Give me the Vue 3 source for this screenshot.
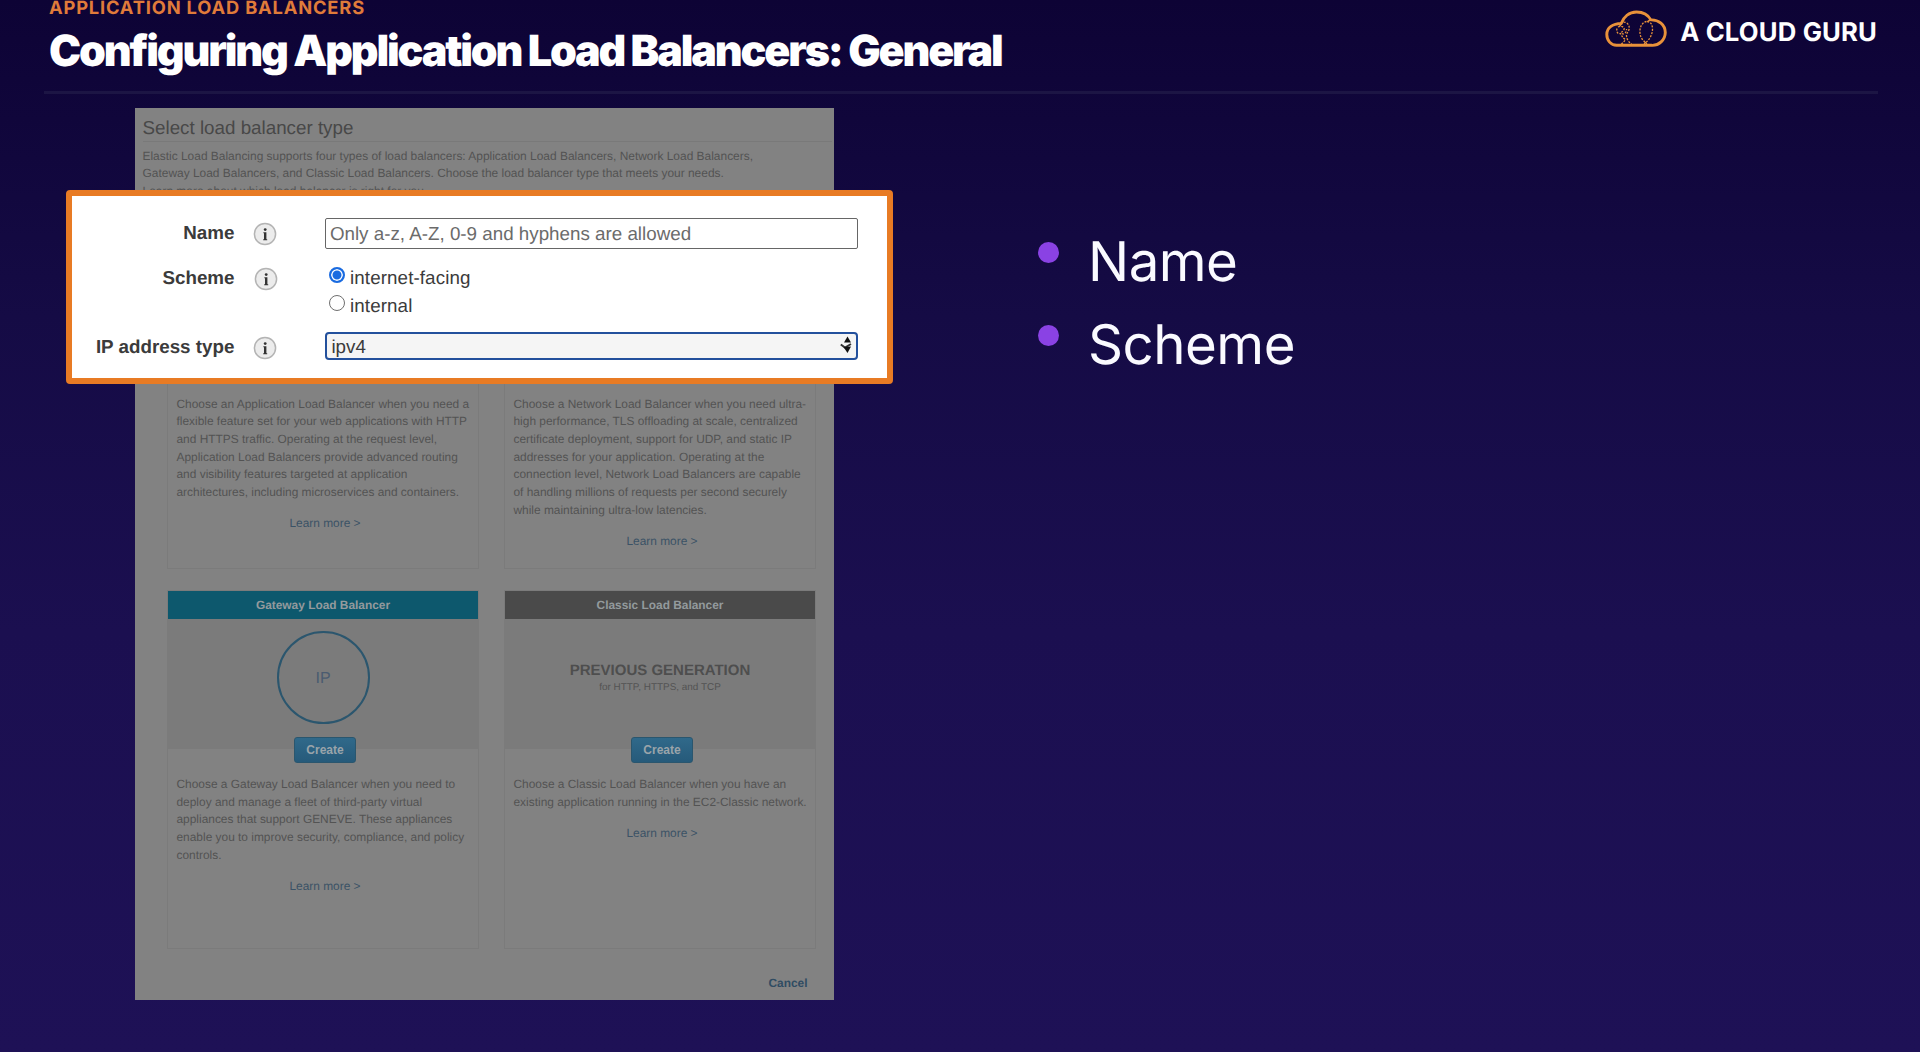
<script setup>
const topCards = [
  {
    lines: [
      'Choose an Application Load Balancer when you need a',
      'flexible feature set for your web applications with HTTP',
      'and HTTPS traffic. Operating at the request level,',
      'Application Load Balancers provide advanced routing',
      'and visibility features targeted at application',
      'architectures, including microservices and containers.',
    ],
  },
  {
    lines: [
      'Choose a Network Load Balancer when you need ultra-',
      'high performance, TLS offloading at scale, centralized',
      'certificate deployment, support for UDP, and static IP',
      'addresses for your application. Operating at the',
      'connection level, Network Load Balancers are capable',
      'of handling millions of requests per second securely',
      'while maintaining ultra-low latencies.',
    ],
  },
]
const bottomCards = [
  {
    title: 'Gateway Load Balancer',
    kind: 'gateway',
    lines: [
      'Choose a Gateway Load Balancer when you need to',
      'deploy and manage a fleet of third-party virtual',
      'appliances that support GENEVE. These appliances',
      'enable you to improve security, compliance, and policy',
      'controls.',
    ],
  },
  {
    title: 'Classic Load Balancer',
    kind: 'classic',
    lines: [
      'Choose a Classic Load Balancer when you have an',
      'existing application running in the EC2-Classic network.',
    ],
  },
]
const bullets = ['Name', 'Scheme']
</script>

<template>
  <div class="slide">
    <header class="head">
      <div class="titles">
        <div class="eyebrow">APPLICATION LOAD BALANCERS</div>
        <h1 class="title">Configuring Application Load Balancers: General</h1>
      </div>
      <div class="brand">
        <svg class="cloud" width="64" height="40" viewBox="0 0 64 40" fill="none" stroke="#e8913a">
          <path d="M12.5 36.3H47.5A13 13 0 0 0 61.3 23.500C61.300 15.500 54.500 10.600 46.800 10.900C44 5.500 38.500 3 32.500 3C25 3 19.500 8 17.200 14.500C9 14.800 2.800 18.500 2.800 25.500C2.800 31.500 7 36.300 12.500 36.300Z" stroke-width="2.900" stroke-linejoin="round" />
          <path d="M46.800 10.900C45.300 11.200 44.300 11.800 43.300 12.800M17.200 14.500C16.500 15.500 16 16.300 15.800 17.500" stroke-width="1.500" />
          <g stroke-width="1.300" stroke-dasharray="2 1.300">
            <path d="M42.500 12.500C37.500 13.500 35.500 19 36 24C36.500 29 39 31.500 41.500 33.500C45 31.500 48.500 26 48.500 20C48.500 15.500 46.500 12.500 42.500 12.500Z" />
            <path d="M41.500 33.500L39 36M41.500 33.500L44 36" />
            <path d="M16.500 14C21 11 26.500 15.500 25 20.500C24.500 22.500 23 23.500 22.500 26C22.300 30 25 33.500 27.500 35" />
            <path d="M13 19.500C12 23 14 25.500 16.500 24.500C18 27 18.500 29 21.500 30.500C20 33 18 34 17 36" />
            <path d="M14 18C17 16.500 21 18 20 20.500S16 23 18 24.500S23 23 22.500 20" />
          </g>
        </svg>
        <span class="brand-name">A CLOUD GURU</span>
      </div>
    </header>
    <div class="rule"></div>

    <main class="content">
      <section class="panel">
        <h2 class="panel-title">Select load balancer type</h2>
        <div class="intro">
          <div>Elastic Load Balancing supports four types of load balancers: Application Load Balancers, Network Load Balancers,</div>
          <div>Gateway Load Balancers, and Classic Load Balancers. Choose the load balancer type that meets your needs.</div>
          <div>Learn more about which load balancer is right for you</div>
        </div>
        <div class="grid">
          <article v-for="(c, i) in topCards" :key="i" class="card top">
            <div class="copy">
              <div v-for="l in c.lines" :key="l">{{ l }}</div>
            </div>
            <div class="more">Learn more &gt;</div>
          </article>
        </div>
        <div class="grid second">
          <article v-for="c in bottomCards" :key="c.title" class="card bottom">
            <div class="card-head" :class="c.kind">{{ c.title }}</div>
            <div class="hero">
              <div v-if="c.kind === 'gateway'" class="ring">IP</div>
              <template v-else>
                <div class="prev">PREVIOUS GENERATION</div>
                <div class="protocols">for HTTP, HTTPS, and TCP</div>
              </template>
              <button class="create">Create</button>
            </div>
            <div class="copy">
              <div v-for="l in c.lines" :key="l">{{ l }}</div>
            </div>
            <div class="more">Learn more &gt;</div>
          </article>
        </div>
        <div class="cancel">Cancel</div>
      </section>

      <ul class="bullets">
        <li v-for="b in bullets" :key="b"><i class="dot"></i><span>{{ b }}</span></li>
      </ul>
    </main>

    <form class="callout">
      <div v-for="f in ['Name', 'Scheme', 'IP address type']" :key="f" class="field" :class="'f-' + f.slice(0, 2).toLowerCase()">
        <label class="label">{{ f }}</label>
        <svg class="info" width="24" height="24" viewBox="0 0 24 24">
          <circle cx="12" cy="12" r="10.600" fill="#ececec" stroke="#b4b4b4" stroke-width="1.500" />
          <circle cx="12.200" cy="7.600" r="1.400" fill="#333" />
          <path d="M10.400 10.200H13.400V17.200H14.200V18.200H10.200V17.200H11V11.200H10.400Z" fill="#333" />
        </svg>
        <div v-if="f === 'Name'" class="input">Only a-z, A-Z, 0-9 and hyphens are allowed</div>
        <div v-else-if="f === 'Scheme'" class="radios">
          <div class="radio"><i class="knob on"></i><span>internet-facing</span></div>
          <div class="radio"><i class="knob"></i><span>internal</span></div>
        </div>
        <div v-else class="select">
          <span>ipv4</span>
          <svg width="12" height="18" viewBox="0 0 12 18">
            <path d="M7.500 0.500L11 6.500H4Z" fill="#111" />
            <path d="M0.800 8.500L5 11.500L11 8" fill="none" stroke="#333" stroke-width="2" />
            <path d="M3.500 11L11 10.500L7.500 17Z" fill="#111" />
          </svg>
        </div>
      </div>
    </form>
  </div>
</template>

<style>
body {
  margin: 0;
  overflow: hidden;
}
</style>

<style scoped>
.slide {
  position: relative;
  box-sizing: border-box;
  width: 1920px;
  height: 1052px;
  overflow: hidden;
  background: linear-gradient(180deg, #0d0335 0%, #150b45 30%, #1b0f50 60%, #1e1156 100%);
  font-family: "Liberation Sans", Arial, sans-serif;
  text-rendering: geometricPrecision;
}
.head {
  display: flex;
  justify-content: space-between;
  height: 91px;
  padding: 0 43px 0 49px;
}
.eyebrow {
  height: 18px;
  font: 700 18.3px/16px Inter, sans-serif;
  letter-spacing: 0.84px;
  color: #e07b3a;
  white-space: nowrap;
}
.title {
  margin: 7px 0 0;
  font: 900 43px/52px Inter, sans-serif;
  letter-spacing: -2.15px;
  color: #fff;
  white-space: nowrap;
}
.brand {
  display: flex;
  align-items: flex-start;
}
.cloud {
  margin: 9px 12px 0 0;
}
.brand-name {
  margin-top: 17px;
  font: 700 25.7px/32px Inter, sans-serif;
  letter-spacing: 0.15px;
  color: #fff;
  white-space: nowrap;
}
.rule {
  height: 3px;
  margin: 0 42px 0 44px;
  background: #1c1544;
}
.content {
  display: flex;
  padding: 14px 0 0 135px;
}
.panel {
  display: flex;
  flex-direction: column;
  box-sizing: border-box;
  width: 699px;
  height: 892px;
  background: #828282;
  color: #535353;
  font-size: 11.9px;
  line-height: 17.67px;
  white-space: nowrap;
}
.panel-title {
  height: 33px;
  margin: 0 2px 0 7.5px;
  border-bottom: 1px solid #797979;
  font-size: 18.8px;
  font-weight: 400;
  line-height: 39px;
  color: #484848;
}
.intro {
  height: 53px;
  box-sizing: border-box;
  flex: none;
  padding: 5.5px 0 0 7.5px;
  margin-bottom: 6px;
  overflow: hidden;
  font-size: 11.95px;
}
.grid {
  display: flex;
  gap: 25px;
  margin-left: 32px;
}
.card {
  display: flex;
  flex-direction: column;
  box-sizing: border-box;
  width: 312px;
  border: 1px solid #7b7b7b;
}
.top {
  height: 368px;
  padding-top: 193.5px;
}
.second {
  margin-top: 21px;
}
.bottom {
  height: 359px;
}
.copy {
  padding-left: 8.5px;
  font-size: 11.91px;
}
.more {
  margin-top: 13.5px;
  padding-left: 4px;
  text-align: center;
  color: #3b5266;
}
.card-head {
  height: 28px;
  text-align: center;
  font-weight: 700;
  line-height: 28px;
  color: #939a9d;
}
.gateway {
  background: #0d586d;
}
.classic {
  background: #4a4a4a;
}
.hero {
  position: relative;
  display: flex;
  flex-direction: column;
  align-items: center;
  height: 130px;
  margin-bottom: 27px;
  background: #7b7b7b;
}
.ring {
  box-sizing: border-box;
  width: 93px;
  height: 93px;
  margin-top: 12px;
  border: 2px solid #2b566e;
  border-radius: 50%;
  text-align: center;
  font-size: 16px;
  line-height: 91px;
  color: #4a5b70;
}
.prev {
  margin-top: 42px;
  font-size: 15px;
  font-weight: 700;
  line-height: 20px;
  color: #4e4e4e;
}
.protocols {
  font-size: 9.95px;
  line-height: 14px;
}
.create {
  position: absolute;
  top: 118px;
  left: 126px;
  width: 62px;
  height: 26px;
  padding: 0;
  border: 1px solid #2a566e;
  border-radius: 3px;
  background: linear-gradient(#30698a, #265a7a);
  color: #9aa4aa;
  font: 700 12px/24px "Liberation Sans", Arial, sans-serif;
}
.cancel {
  margin: 26px 26.5px 0 0;
  text-align: right;
  font-weight: 700;
  color: #304c62;
}
.bullets {
  margin: 118px 0 0 204px;
  padding: 0;
  list-style: none;
}
.bullets li {
  display: flex;
  height: 83px;
  font: 400 54.6px/72px Inter, sans-serif;
  letter-spacing: -0.5px;
  color: #fafaff;
}
.dot {
  width: 21px;
  height: 21px;
  margin: 16px 29px 0 0;
  border-radius: 50%;
  background: #8a42e4;
}
.callout {
  position: absolute;
  top: 190px;
  left: 66px;
  box-sizing: border-box;
  width: 827px;
  height: 194px;
  padding: 22px 29px 0 0;
  border: 6px solid #e87b24;
  border-radius: 4px;
  background: #fff;
  color: #3b3b3b;
  font-size: 18.8px;
  line-height: 24px;
  white-space: nowrap;
}
.field {
  display: flex;
}
.f-na {
  height: 45px;
}
.f-sc {
  height: 69px;
}
.label {
  width: 162.500px;
  margin-top: 2.500px;
  text-align: right;
  font-weight: 700;
}
.info {
  margin: 4px 48px 0 19px;
}
.input {
  box-sizing: border-box;
  width: 533px;
  height: 31px;
  padding-left: 3.5px;
  border: 1px solid #666;
  border-radius: 2px;
  line-height: 29px;
  color: #6b6b6b;
}
.radios {
  padding: 3px 0 0 3px;
}
.radio {
  display: flex;
  height: 28px;
  letter-spacing: 0.1px;
}
.knob {
  display: flex;
  box-sizing: border-box;
  width: 16px;
  height: 16px;
  margin: 1px 5.5px 0 0;
  border: 1.3px solid #6f6f6f;
  border-radius: 50%;
}
.knob.on {
  border: 2px solid #1a6be0;
  background: #1a6be0;
  box-shadow: inset 0 0 0 1.500px #fff;
}
.select {
  display: flex;
  justify-content: space-between;
  box-sizing: border-box;
  width: 533px;
  height: 28px;
  padding: 0 4px 0 4px;
  border: 2px solid #23509c;
  border-radius: 4px;
  background: #f5f5f5;
  line-height: 25px;
}
.select svg {
  margin-top: 1.500px;
}
</style>
